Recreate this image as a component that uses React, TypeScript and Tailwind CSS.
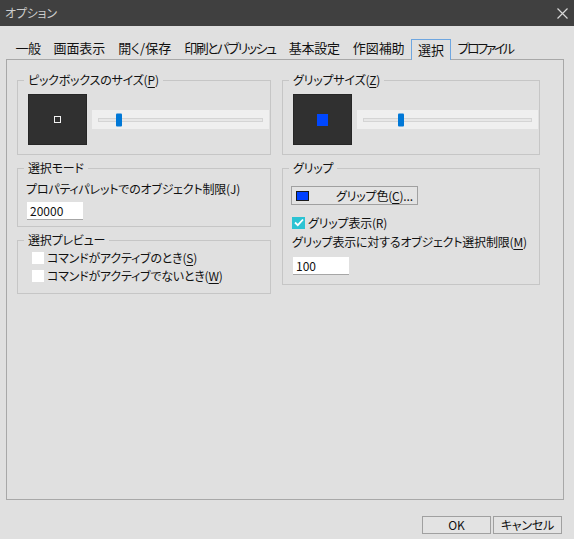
import type { ReactNode } from 'react'

// mnemonic letter with underline
function U({ c }: { c: string }) {
  return <span className="underline underline-offset-[2px]">{c}</span>
}

function Group({ title, className = '', children }: { title: ReactNode; className?: string; children: ReactNode }) {
  return (
    <fieldset className={`border border-[#c6c6c6] ${className}`}>
      <legend className="ml-[6px] px-[4px] leading-[14px]">{title}</legend>
      {children}
    </fieldset>
  )
}

function SizeSlider({ thumb, marker }: { thumb: number; marker: ReactNode }) {
  return (
    <div className="flex items-center pl-[10px] pr-[1px] pt-[7px] pb-[9px]">
      <div className="w-[59px] h-[51px] bg-[#303030] border border-[#262626] flex items-center justify-center">
        {marker}
      </div>
      <div className="ml-[5px] flex-1 h-[19px] bg-[#efefef] flex items-center px-[6px]">
        <div className="relative flex-1 h-[4px] bg-[#e7e7e7] border border-[#d4d4d4]">
          <div
            className="absolute top-1/2 -translate-y-1/2 w-[6px] h-[13px] bg-[#0078d7] rounded-[1px]"
            style={{ left: thumb }}
          />
        </div>
      </div>
    </div>
  )
}

function Input({ value }: { value: string }) {
  return (
    <div className="w-[56px] h-[18px] bg-white border-b border-[#a6a6a6] pl-[3px] leading-[18px] text-[12px] tracking-normal">
      {value}
    </div>
  )
}

function Checkbox({ checked = false }: { checked?: boolean }) {
  if (checked) {
    return (
      <div className="w-[13px] h-[12px] bg-[#2cc3d3] flex items-center justify-center">
        <svg width="10" height="9" viewBox="0 0 10 9">
          <path d="M1 4.5 L3.8 7.2 L9 1.5" fill="none" stroke="white" strokeWidth="1.8" />
        </svg>
      </div>
    )
  }
  return <div className="w-[12px] h-[12px] bg-white" />
}

const tabs = [
  { label: '一般', cls: 'tracking-[-0.5px]' },
  { label: '画面表示', cls: 'tracking-[-0.1px]' },
  { label: '開く/保存', cls: 'tracking-[0px]' },
  { label: '印刷とパブリッシュ', cls: 'tracking-[-1.5px]' },
  { label: '基本設定', cls: 'tracking-[-0.2px]' },
  { label: '作図補助', cls: 'tracking-[-0.1px]' },
  { label: '選択', cls: 'tracking-[0px]', active: true },
  { label: 'プロファイル', cls: 'tracking-[-2.4px]' },
]

export default function App() {
  return (
    <div className="w-[574px] h-[539px] flex flex-col whitespace-nowrap bg-[#e0e0e0] text-[12px] tracking-[-0.2px] text-[#111] [font-family:'Noto_Sans_CJK_JP',sans-serif] [font-feature-settings:'palt']">
      {/* Title bar */}
      <div className="h-[26px] bg-[#404040] flex items-center justify-between pl-[5px] pr-[6px] text-[#cccccc] text-[12px]">
        <span>オプション</span>
        <svg width="11" height="11" viewBox="0 0 11 11">
          <path d="M0.5 0.5 L10.5 10.5 M10.5 0.5 L0.5 10.5" stroke="#d8d8d8" strokeWidth="1.2" />
        </svg>
      </div>

      {/* Tabs */}
      <div className="mt-[13px] ml-[9px] flex items-end h-[20px] relative z-10 text-[13px]">
        {tabs.map((t) =>
          t.active ? (
            <div
              key={t.label}
              className={`h-[21px] -mb-[1px] px-[6px] border border-b-0 border-[#6ea6e0] bg-[#e0e0e0] leading-[19px] ${t.cls}`}
            >
              {t.label}
            </div>
          ) : (
            <div key={t.label} className={`h-[20px] px-[6.5px] leading-[18px] ${t.cls}`}>
              {t.label}
            </div>
          )
        )}
      </div>

      {/* Panel */}
      <div className="flex-1 ml-[6px] w-[558px] border border-[#a8a8a8] pt-[13px] pl-[10px] flex gap-[11px]">
        {/* left column */}
        <div className="w-[254px] flex flex-col gap-[6px]">
          <Group title={<>ピックボックスのサイズ(<U c="P" />)</>}>
            <SizeSlider
              thumb={17}
              marker={<div className="w-[7px] h-[7px] border-[1.5px] border-[#f2f2f2] bg-[#303030]" />}
            />
          </Group>

          <Group title="選択モード">
            <div className="pl-[8px] pt-[7px] pb-[6px]">
              <div className="leading-[14px]">プロパティパレットでのオブジェクト制限(J)</div>
              <div className="mt-[6px] ml-[1px]">
                <Input value="20000" />
              </div>
            </div>
          </Group>

          <Group title="選択プレビュー">
            <div className="pl-[14px] pt-[2px] pb-[8px]">
              <div className="h-[18px] flex items-center gap-[3px]">
                <Checkbox />
                <span>コマンドがアクティブのとき(<U c="S" />)</span>
              </div>
              <div className="h-[18px] flex items-center gap-[3px]">
                <Checkbox />
                <span>コマンドがアクティブでないとき(<U c="W" />)</span>
              </div>
            </div>
          </Group>
        </div>

        {/* right column */}
        <div className="w-[258px] flex flex-col gap-[6px]">
          <Group title={<>グリップサイズ(<U c="Z" />)</>}>
            <SizeSlider thumb={34} marker={<div className="w-[11px] h-[12px] bg-[#0047ff]" />} />
          </Group>

          <Group title="グリップ">
            <div className="pl-[8px] pt-[11px] pb-[9px]">
              <div className="w-[127px] h-[19px] bg-[#e3e3e3] border border-[#a0a0a0] flex items-center pl-[4px]">
                <div className="w-[13px] h-[10px] bg-[#0040ff] border border-[#1a1a1a]" />
                <span className="ml-[27px]">
                  グリップ色(<U c="C" />)...
                </span>
              </div>
              <div className="mt-[9px] h-[17px] flex items-center gap-[3px] pl-[1px]">
                <Checkbox checked />
                <span>グリップ表示(R)</span>
              </div>
              <div className="mt-[4px] pl-[1px] leading-[14px]">
                グリップ表示に対するオブジェクト選択制限(<U c="M" />)
              </div>
              <div className="mt-[8px] ml-[2px]">
                <Input value="100" />
              </div>
            </div>
          </Group>
        </div>
      </div>

      {/* Footer buttons */}
      <div className="h-[39px] flex justify-end items-start pt-[16px] pr-[12px] gap-[2px]">
        <div className="w-[69px] h-[18px] bg-[#e3e3e3] border border-[#a0a0a0] flex items-center justify-center text-[12px]">
          OK
        </div>
        <div className="w-[69px] h-[18px] bg-[#e3e3e3] border border-[#a0a0a0] flex items-center justify-center">
          キャンセル
        </div>
      </div>
    </div>
  )
}
